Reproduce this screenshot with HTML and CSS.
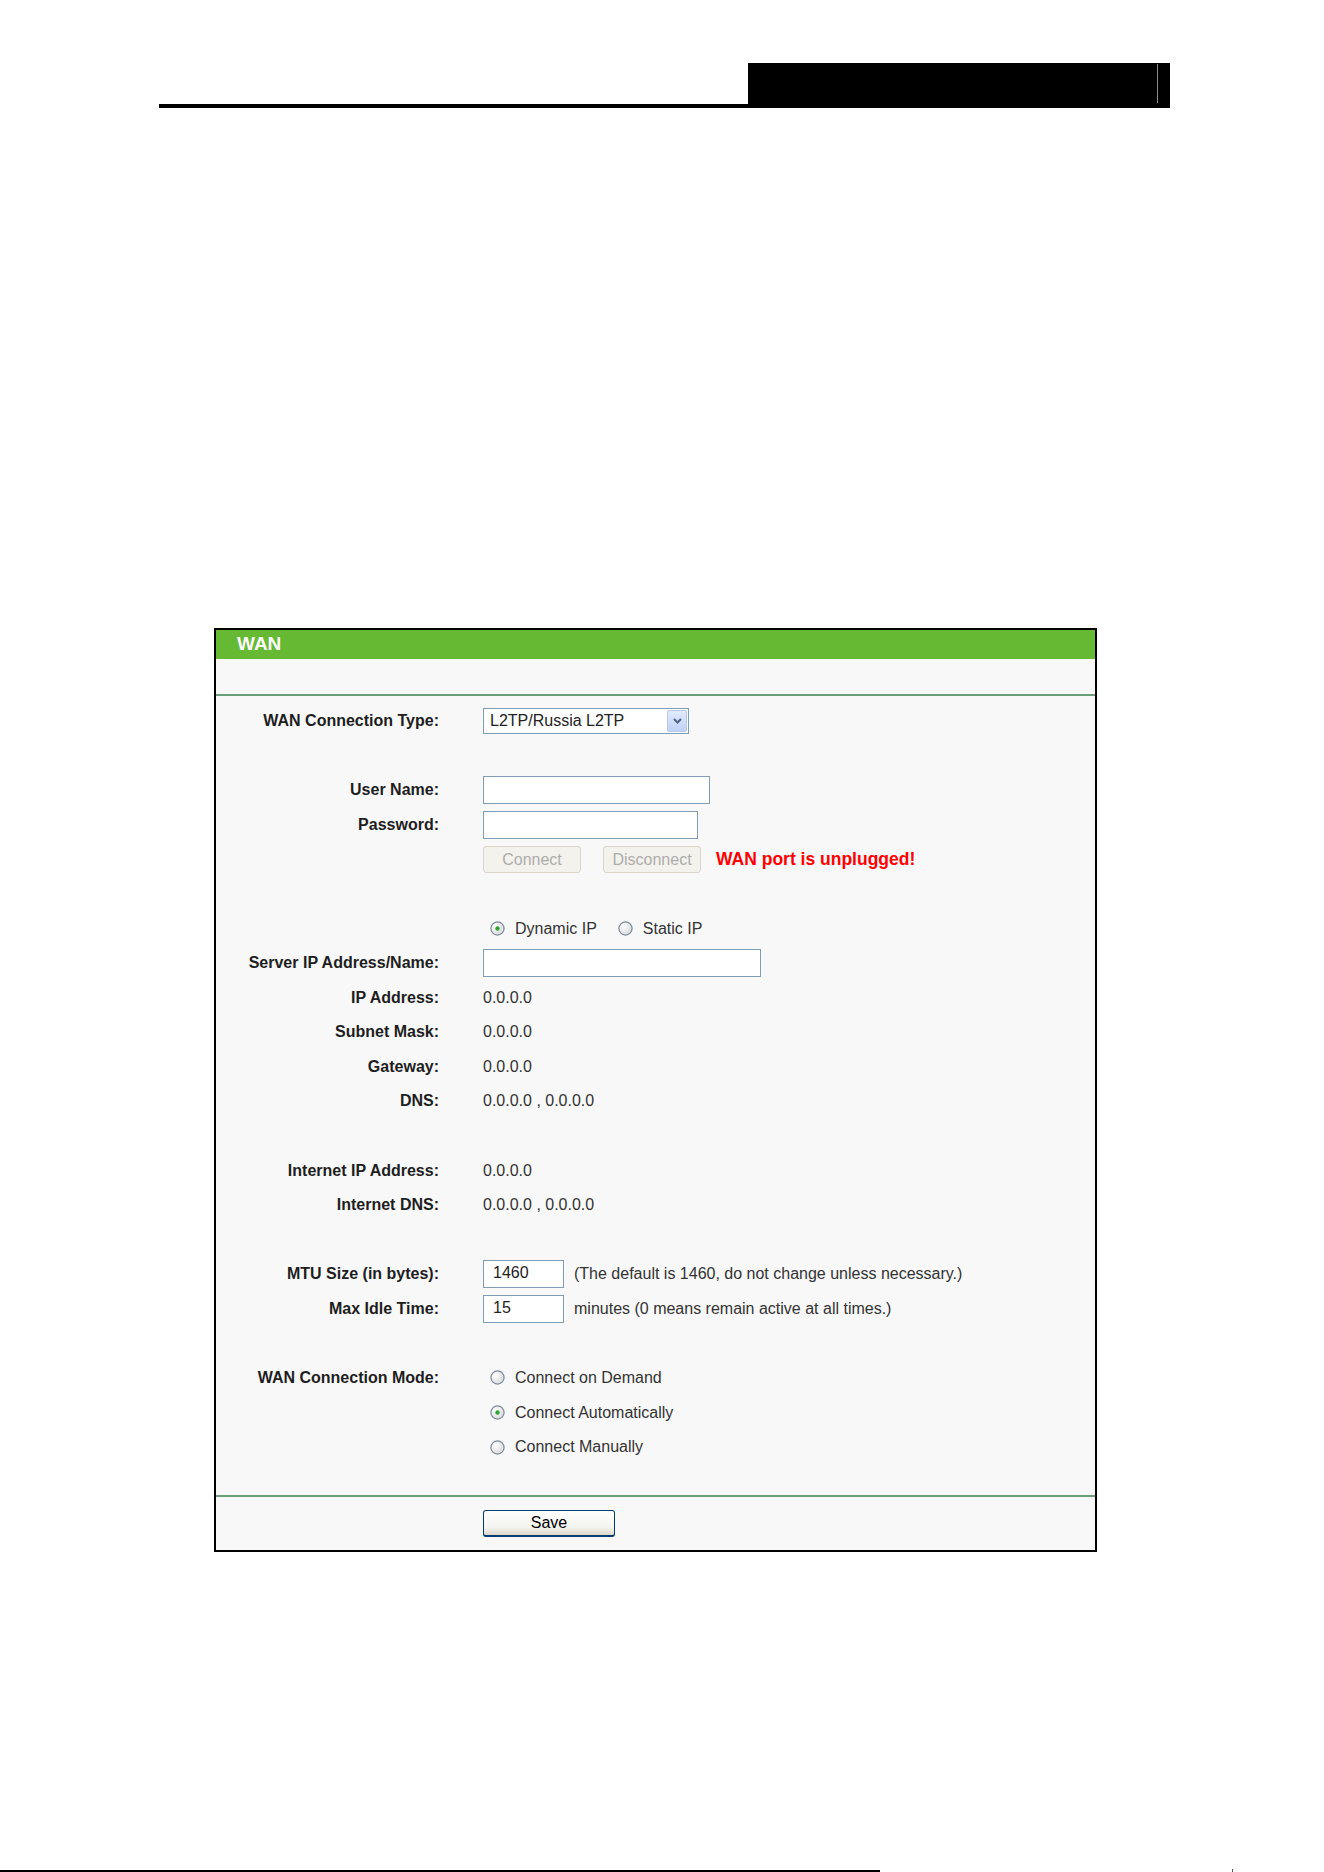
FILE: index.html
```html
<!DOCTYPE html>
<html lang="en">
<head>
    <meta charset="UTF-8">
    <meta name="viewport" content="width=device-width, initial-scale=1.0">
    <title>WAN</title>
    <link rel="stylesheet" href="styles.css">
</head>
<body>
<div class="page">
    <div class="doc-header">
        <div class="header-box"><div class="header-rule"></div></div>
    </div>

    <svg class="defs" width="0" height="0">
        <defs>
            <radialGradient id="radio-fill" cx="35%" cy="35%" r="70%">
                <stop offset="0" stop-color="#ffffff"/>
                <stop offset="1" stop-color="#d8d8d8"/>
            </radialGradient>
        </defs>
    </svg>

    <div class="panel">
        <div class="panel-title">WAN</div>
        <div class="panel-sub"></div>
        <div class="panel-body">
            <div class="row">
                <div class="label">WAN Connection Type:</div>
                <div class="value">
                    <div class="select">
                        <span>L2TP/Russia L2TP</span>
                        <span class="select-btn">
                            <svg width="9" height="6" viewBox="0 0 9 6"><path d="M1 1 L4.5 4.5 L8 1" fill="none" stroke="#4d6185" stroke-width="2"/></svg>
                        </span>
                    </div>
                </div>
            </div>
            <div class="row"></div>
            <div class="row">
                <div class="label">User Name:</div>
                <div class="value"><input class="field w-user" type="text"></div>
            </div>
            <div class="row">
                <div class="label">Password:</div>
                <div class="value"><input class="field w-pass" type="password"></div>
            </div>
            <div class="row">
                <div class="label"></div>
                <div class="value">
                    <button class="btn-off">Connect</button>
                    <button class="btn-off gap">Disconnect</button>
                    <span class="warn">WAN port is unplugged!</span>
                </div>
            </div>
            <div class="row"></div>
            <div class="row">
                <div class="label"></div>
                <div class="value">
                    <span class="radio">
                        <svg width="15" height="15" viewBox="0 0 15 15"><circle cx="7.5" cy="7.5" r="6.6" fill="url(#radio-fill)" stroke="#7c8b9d" stroke-width="1.2"/><circle cx="7.5" cy="7.5" r="2.2" fill="#2ea336"/></svg>
                        Dynamic IP
                    </span>
                    <span class="radio next">
                        <svg width="15" height="15" viewBox="0 0 15 15"><circle cx="7.5" cy="7.5" r="6.6" fill="url(#radio-fill)" stroke="#7c8b9d" stroke-width="1.2"/></svg>
                        Static IP
                    </span>
                </div>
            </div>
            <div class="row">
                <div class="label">Server IP Address/Name:</div>
                <div class="value"><input class="field w-server" type="text"></div>
            </div>
            <div class="row">
                <div class="label">IP Address:</div>
                <div class="value">0.0.0.0</div>
            </div>
            <div class="row">
                <div class="label">Subnet Mask:</div>
                <div class="value">0.0.0.0</div>
            </div>
            <div class="row">
                <div class="label">Gateway:</div>
                <div class="value">0.0.0.0</div>
            </div>
            <div class="row">
                <div class="label">DNS:</div>
                <div class="value">0.0.0.0 , 0.0.0.0</div>
            </div>
            <div class="row"></div>
            <div class="row">
                <div class="label">Internet IP Address:</div>
                <div class="value">0.0.0.0</div>
            </div>
            <div class="row">
                <div class="label">Internet DNS:</div>
                <div class="value">0.0.0.0 , 0.0.0.0</div>
            </div>
            <div class="row"></div>
            <div class="row">
                <div class="label">MTU Size (in bytes):</div>
                <div class="value"><input class="field w-small" type="text" value="1460"><span class="hint">(The default is 1460, do not change unless necessary.)</span></div>
            </div>
            <div class="row">
                <div class="label">Max Idle Time:</div>
                <div class="value"><input class="field w-small" type="text" value="15"><span class="hint">minutes (0 means remain active at all times.)</span></div>
            </div>
            <div class="row"></div>
            <div class="row">
                <div class="label">WAN Connection Mode:</div>
                <div class="value">
                    <span class="radio">
                        <svg width="15" height="15" viewBox="0 0 15 15"><circle cx="7.5" cy="7.5" r="6.6" fill="url(#radio-fill)" stroke="#7c8b9d" stroke-width="1.2"/></svg>
                        Connect on Demand
                    </span>
                </div>
            </div>
            <div class="row">
                <div class="label"></div>
                <div class="value">
                    <span class="radio">
                        <svg width="15" height="15" viewBox="0 0 15 15"><circle cx="7.5" cy="7.5" r="6.6" fill="url(#radio-fill)" stroke="#7c8b9d" stroke-width="1.2"/><circle cx="7.5" cy="7.5" r="2.2" fill="#2ea336"/></svg>
                        Connect Automatically
                    </span>
                </div>
            </div>
            <div class="row">
                <div class="label"></div>
                <div class="value">
                    <span class="radio">
                        <svg width="15" height="15" viewBox="0 0 15 15"><circle cx="7.5" cy="7.5" r="6.6" fill="url(#radio-fill)" stroke="#7c8b9d" stroke-width="1.2"/></svg>
                        Connect Manually
                    </span>
                </div>
            </div>
        </div>
        <div class="panel-foot">
            <button class="btn-save">Save</button>
        </div>
    </div>

    <div class="page-foot">
        <div class="foot-line"></div>
        <div class="foot-mark"></div>
    </div>
</div>
</body>
</html>
```

FILE: styles.css
```css
body {
    margin: 0;
    background: #fff;
    font-family: "Liberation Sans", Arial, sans-serif;
}
.page {
    height: 1872px;
    display: flex;
    flex-direction: column;
    overflow: hidden;
}
.defs {
    position: absolute;
}

/* document header */
.doc-header {
    margin: 63px 0 0 159px;
    width: 1011px;
    display: flex;
    justify-content: flex-end;
    border-bottom: 4px solid #000;
}
.header-box {
    width: 422px;
    height: 41px;
    background: #000;
    display: flex;
    justify-content: flex-end;
    padding-right: 12px;
    box-sizing: border-box;
}
.header-rule {
    width: 1px;
    margin: 1px 0;
    background: #8a8a8a;
}

/* WAN panel */
.panel {
    margin: 520px 0 0 214px;
    width: 883px;
    border: 2px solid #000;
    background: #f8f8f8;
    box-sizing: border-box;
}
.panel-title {
    height: 29px;
    line-height: 27px;
    background: #66b933;
    color: #fff;
    font-weight: bold;
    font-size: 19px;
    padding-left: 21px;
}
.panel-sub {
    height: 35px;
}
.panel-body {
    border-top: 2px solid #6a9f7c;
    padding: 8px 0 31px;
}
.row {
    display: flex;
    align-items: center;
    height: 34.57px;
}
.label {
    width: 223px;
    flex-shrink: 0;
    text-align: right;
    font-weight: bold;
    font-size: 16px;
    color: #1e1e1e;
}
.value {
    padding-left: 44px;
    display: flex;
    align-items: center;
    font-size: 16px;
    color: #333;
}

.select {
    width: 206px;
    height: 26px;
    border: 1px solid #7f9db9;
    background: #fff;
    box-sizing: border-box;
    display: flex;
    align-items: center;
    justify-content: space-between;
    padding: 0 1px 0 6px;
    color: #222;
}
.select-btn {
    width: 20px;
    height: 22px;
    border: 1px solid #b7c9ef;
    border-radius: 2px;
    box-sizing: border-box;
    background: linear-gradient(#e2ebfd, #bfd1f7);
    display: flex;
    align-items: center;
    justify-content: center;
}

.field {
    height: 28px;
    border: 1px solid #7f9db9;
    background: #fff;
    box-sizing: border-box;
    padding: 0 0 2px 9px;
    font-family: "Liberation Sans", Arial, sans-serif;
    font-size: 16px;
    color: #222;
    outline: none;
}
.w-user { width: 227px; }
.w-pass { width: 215px; }
.w-server { width: 278px; }
.w-small { width: 81px; }
.hint {
    margin-left: 10px;
}

.btn-off {
    width: 98px;
    height: 27px;
    border: 1px solid #d9d5c7;
    border-radius: 3px;
    background: #f4f2ec;
    color: #adadad;
    font-family: "Liberation Sans", Arial, sans-serif;
    font-size: 16px;
    padding: 0;
}
.btn-off.gap {
    margin-left: 22px;
}
.warn {
    margin-left: 15px;
    color: #ff0000;
    font-weight: bold;
    font-size: 17.5px;
}

.radio {
    display: flex;
    align-items: center;
    gap: 10px;
    margin-left: 7px;
}
.radio.next {
    margin-left: 21px;
}

.panel-foot {
    border-top: 2px solid #6a9f7c;
    height: 53px;
    display: flex;
    align-items: center;
    padding-left: 267px;
}
.btn-save {
    width: 132px;
    height: 27px;
    border: 1px solid #003c74;
    border-bottom-width: 2px;
    border-radius: 3px;
    background: linear-gradient(#ffffff, #f3f3ef 70%, #dcd8cc);
    color: #000;
    font-family: "Liberation Sans", Arial, sans-serif;
    font-size: 16px;
    padding: 0;
}

/* page bottom rule */
.page-foot {
    margin-top: auto;
    display: flex;
    align-items: flex-end;
}
.foot-line {
    width: 880px;
    height: 2px;
    background: #000;
}
.foot-mark {
    margin-left: 352px;
    width: 1px;
    height: 3px;
    background: #555;
}
```
